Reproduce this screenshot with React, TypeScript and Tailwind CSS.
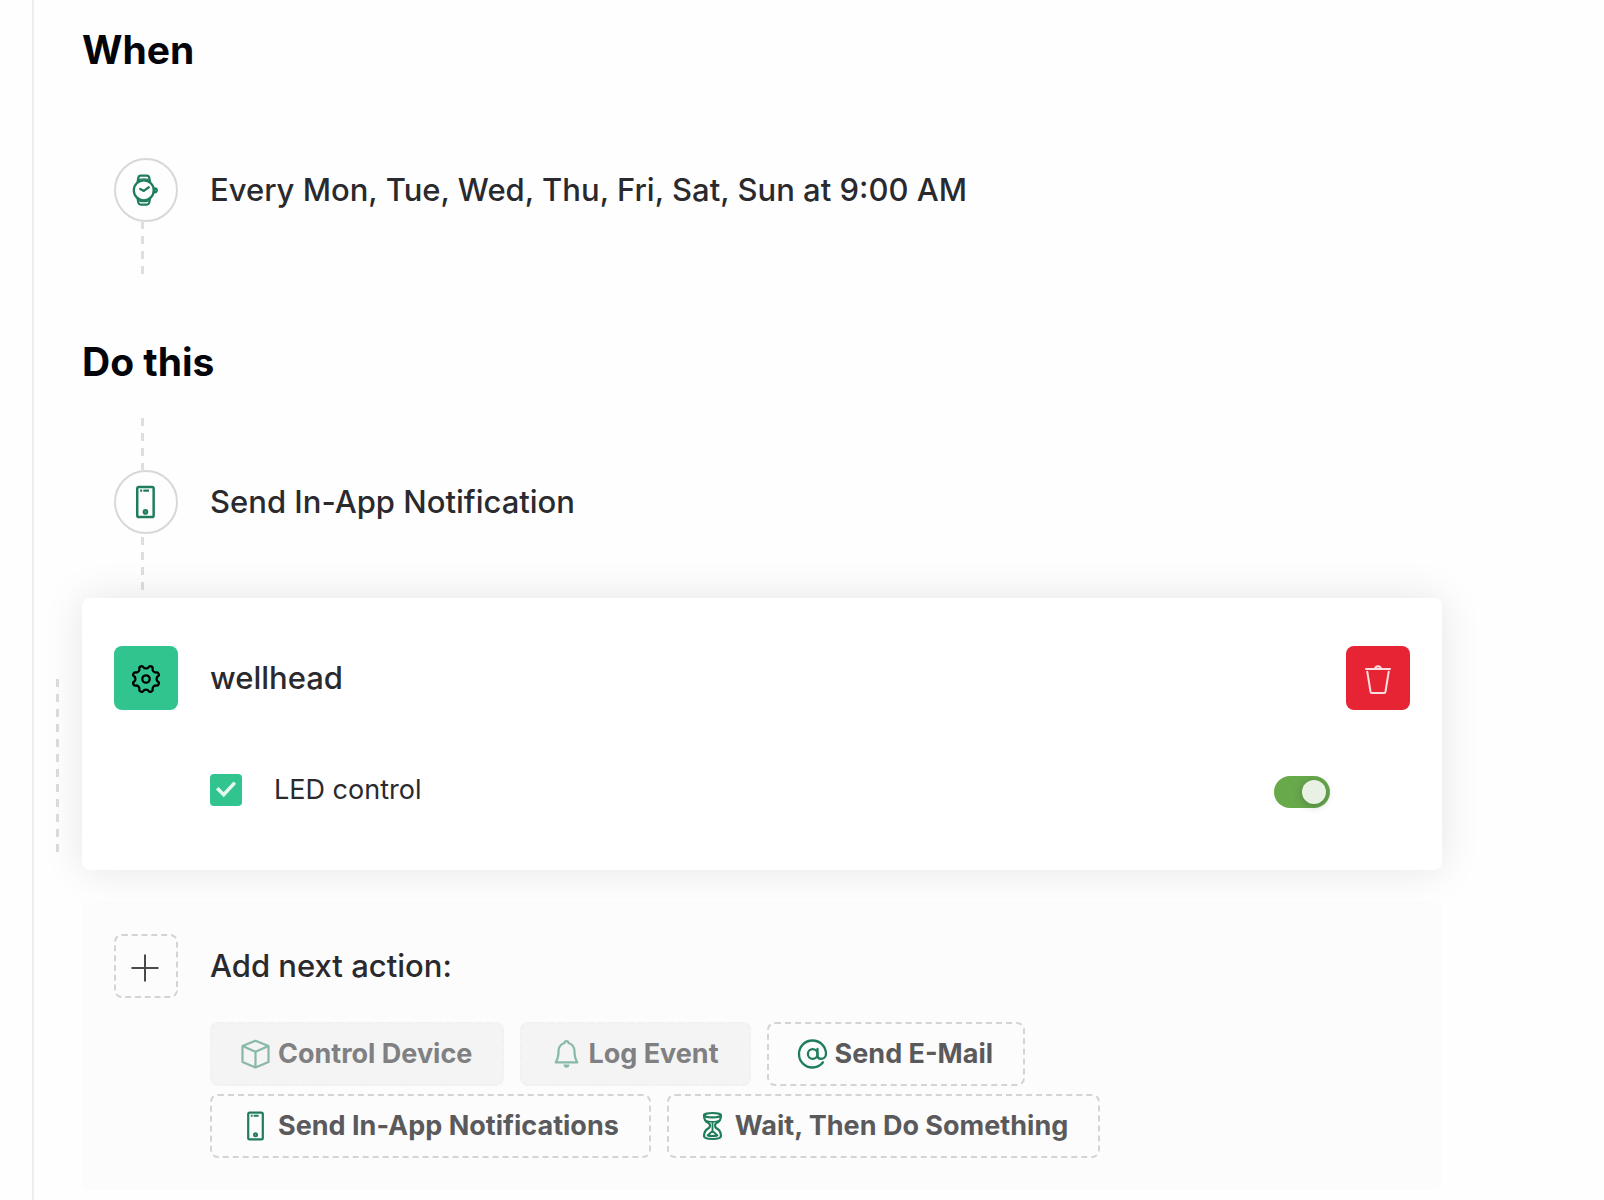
import type { ReactNode } from "react";

function WatchIcon() {
  return (
    <svg viewBox="0 0 28 34" className="h-[34px] w-7" fill="none" stroke="#1f7d5b" strokeWidth="2.300" strokeLinecap="round" strokeLinejoin="round" aria-hidden="true">
      <circle cx="11.800" cy="17.300" r="10" />
      <path d="M5.600 9 6.500 4.200Q7 2.600 8.700 2.600h6.200q1.700 0 2.200 1.600l.9 4.800" />
      <path d="M7.500 6.400q4.300-1 8.600 0M7.500 28.200q4.300 1 8.600 0" strokeWidth="1.300" />
      <path d="M5.600 25.600 6.500 30q.5 1.600 2.200 1.600h6.200q1.700 0 2.200-1.600l.9-4.400" />
      <path d="M8.200 16 11.800 17.900 16.800 14.300" />
      <path d="M22 15.300 24 15.600q1.600 1.700 0 3.400L22 19.300z" />
    </svg>
  );
}

function PhoneIcon({ className }: { className: string }) {
  return (
    <svg viewBox="0 0 32 32" className={className} fill="none" stroke="#1f7d5b" strokeWidth="2.200" strokeLinejoin="round" aria-hidden="true">
      <rect x="8.200" y="2.600" width="14.600" height="26.800" rx="1.400" />
      <path d="M10.800 5.800h1.800M13.600 5.800h5" strokeWidth="2" />
      <circle cx="15.500" cy="24.800" r="2.500" fill="#1f7d5b" stroke="none" />
      <circle cx="15.500" cy="24.800" r="0.600" fill="#8fc0ad" stroke="none" />
    </svg>
  );
}

function GearIcon() {
  return (
    <svg viewBox="0 -1 32 32" className="size-8" fill="none" stroke="#000" strokeWidth="2.300" strokeLinejoin="round" aria-hidden="true">
      <circle cx="16" cy="16" r="3.700" />
      <path d="M16 5.400Q18 5.400 18.600 4.200 19.600 2.600 21 3.300 23 4 22.600 5.600 22.200 7 23.500 8.500 25 9.800 26.400 9.400 28 9 28.700 11 29.400 12.400 27.800 13.400 26.600 14 26.600 16 26.600 18 27.800 18.600 29.400 19.600 28.700 21 28 23 26.400 22.600 25 22.200 23.500 23.500 22.200 25 22.600 26.400 23 28 21 28.700 19.600 29.400 18.600 27.800 18 26.600 16 26.600 14 26.600 13.400 27.800 12.400 29.400 11 28.700 9 28 9.400 26.400 9.800 25 8.500 23.500 7 22.200 5.600 22.600 4 23 3.300 21 2.600 19.600 4.200 18.600 5.400 18 5.400 16 5.400 14 4.200 13.400 2.600 12.400 3.300 11 4 9 5.600 9.400 7 9.800 8.500 8.500 9.800 7 9.400 5.600 9 4 11 3.300 12.400 2.600 13.400 4.200 14 5.400 16 5.400Z" />
    </svg>
  );
}

function TrashIcon() {
  return (
    <svg viewBox="0 0 32 32" className="size-8" fill="none" stroke="#fbdfe2" strokeWidth="2" strokeLinecap="round" strokeLinejoin="round" aria-hidden="true">
      <path d="M4 7h24" />
      <path d="M13 6.500q.7-2.300 3-2.300t3 2.300" />
      <path d="M5.300 9.800 8.600 30q.2 1 1.200 1h12.400q1 0 1.200-1l3.300-20.200" />
    </svg>
  );
}

function CubeIcon() {
  return (
    <svg viewBox="0 0 32 32" className="size-8" fill="none" stroke="#1f7d5b" strokeWidth="2.200" strokeLinejoin="round" aria-hidden="true">
      <path d="M15.500 2.800 28.500 8v16L15.500 29.500 2.500 24V8z" />
      <path d="M2.500 8l13 5.700L28.500 8M15.500 13.700v15.800" />
    </svg>
  );
}

function BellIcon() {
  return (
    <svg viewBox="0 0 32 32" className="size-8" fill="none" stroke="#1f7d5b" strokeWidth="2.200" strokeLinejoin="round" aria-hidden="true">
      <path d="M15 3.700q1.500-1.200 3 0l.6 1.300c3.600 1.200 5.900 4.300 5.900 8.300 0 5 .8 8 2.800 11H5.700C7.700 21.300 8.500 18.300 8.500 13.300c0-4 2.300-7.100 5.900-8.300z" />
      <path d="M13.500 26.500h6q-.4 3.200-3 3.200t-3-3.200z" fill="#1f7d5b" stroke="none" />
    </svg>
  );
}

function AtIcon() {
  return (
    <svg viewBox="0 0 32 32" className="size-8" fill="none" stroke="#1f7d5b" strokeWidth="2.300" strokeLinecap="round" aria-hidden="true">
      <circle cx="15.700" cy="16" r="4.800" />
      <path d="M20.500 11v6.500c0 2.200 1.400 3.300 3.400 3.300 3 0 5.100-2 5.100-4.800C29 8.300 23 2.500 15.500 2.500S2 8.300 2 16s6 13.500 13.500 13.500c4.300 0 8-1.900 10.500-5.200" />
    </svg>
  );
}

function HourglassIcon() {
  return (
    <svg viewBox="0 0 32 32" className="size-8" fill="none" stroke="#1f7d5b" strokeWidth="2.200" strokeLinecap="round" strokeLinejoin="round" aria-hidden="true">
      <ellipse cx="15.500" cy="5.200" rx="8.500" ry="2.200" />
      <path d="M7 5.500c0 4.500 1.500 6.300 4.500 7.500q1.500.8 1.500 2.500t-1.500 2.800C8.500 20 7 22 7 26c0 2.300 3 3 8.500 3s8.500-.7 8.500-3c0-4-1.500-6-4.500-7.700Q18 17.200 18 15.500t1.500-2.500c3-1.200 4.500-3 4.500-7.500" />
      <path d="M10 11q5.500 1.800 11 0M15.500 13.500v7M10.500 25.500l5-4.500 5 4.500q-5 1-10 0z" strokeWidth="1.800" />
    </svg>
  );
}

function StepCircle({ children }: { children: ReactNode }) {
  return (
    <div className="flex size-16 shrink-0 items-center justify-center rounded-full border-2 border-[#d8d8d8]">{children}</div>
  );
}

function Chip({ icon, label, disabled }: { icon: ReactNode; label: string; disabled?: boolean }) {
  return (
    <button
      type="button"
      disabled={disabled}
      className="flex h-16 items-center gap-1.5 rounded-lg border-2 border-dashed border-[#d4d4d4] pr-[30px] pl-7 text-[27px] leading-9 font-bold whitespace-nowrap text-[#5a5a5d] disabled:border-[#f1f1f1] disabled:bg-[#f4f4f4] disabled:text-[#808083] disabled:[&>svg]:opacity-50"
    >
      {icon}
      {label}
    </button>
  );
}

export default function App() {
  return (
    <div className="min-h-screen overflow-hidden bg-[#fefefe] pl-8 font-[Inter,'Liberation_Sans',sans-serif] text-[#2a2a2e]">
      <main className="min-h-screen border-l-2 border-[#eeeeee] pr-12 pb-2.5 pl-12">
        <div className="max-w-[1360px]">
          <section className="pt-[26px] pb-[38px]">
            <h2 className="text-[39px] leading-[48px] font-bold text-[#04040b]">When</h2>
            <div className="mt-[84px] flex items-center gap-8 pl-8">
              <StepCircle>
                <WatchIcon />
              </StepCircle>
              <p className="text-[31px] leading-10 font-medium">Every Mon, Tue, Wed, Thu, Fri, Sat, Sun at 9:00 AM</p>
            </div>
            <div className="ml-[59px] h-[52px] w-[3px] bg-[repeating-linear-gradient(to_top,#dedede_0_8px,transparent_8px_15px)]" />
          </section>

          <section className="pt-[26px]">
            <h2 className="text-[39px] leading-[48px] font-bold text-[#04040b]">Do this</h2>
            <div className="mt-8 ml-[59px] h-[52px] w-[3px] bg-[repeating-linear-gradient(to_bottom,#dedede_0_8px,transparent_8px_15px)]" />
            <div className="flex items-center gap-8 pl-8">
              <StepCircle>
                <PhoneIcon className="size-9" />
              </StepCircle>
              <p className="text-[31px] leading-10 font-medium">Send In-App Notification</p>
            </div>
            <div className="mb-2 ml-[59px] h-14 w-[3px] bg-[repeating-linear-gradient(to_top,#dedede_0_8px,transparent_8px_15px)]" />

            <div className="relative rounded-lg bg-white px-8 pt-12 pb-16 shadow-[0_0_40px_rgba(0,0,0,0.1)]">
              <div className="absolute top-[81px] -left-[26px] h-[173px] w-[3px] bg-[repeating-linear-gradient(to_bottom,#dadada_0_8px,transparent_8px_15px)]" />
              <div className="flex items-center gap-8">
                <div className="flex size-16 items-center justify-center rounded-lg bg-[#31c48f]">
                  <GearIcon />
                </div>
                <h3 className="flex-1 text-[31px] leading-10 font-medium">wellhead</h3>
                <button type="button" aria-label="Delete action" className="flex size-16 items-center justify-center rounded-lg bg-[#e72434]">
                  <TrashIcon />
                </button>
              </div>
              <div className="mt-16 flex items-center justify-between pr-20 pl-24">
                <label className="flex items-center gap-8 text-[27px] leading-8">
                  <span className="grid size-8 *:[grid-area:1/1]">
                    <input type="checkbox" defaultChecked className="size-8 appearance-none rounded bg-[#31c48f]" />
                    <svg viewBox="0 0 32 32" className="pointer-events-none size-8" fill="none" stroke="#e4f7ef" strokeWidth="3.600" aria-hidden="true">
                      <path d="M7.200 14.200 13.700 20.700 24.800 8.600" />
                    </svg>
                  </span>
                  LED control
                </label>
                <input
                  type="checkbox"
                  role="switch"
                  defaultChecked
                  aria-label="LED control state"
                  className="mt-0.5 -mb-0.5 flex h-8 w-14 appearance-none items-center rounded-full bg-[#68a94c] p-1 before:size-6 before:rounded-full before:bg-[#e8f1e4] before:shadow-[0_2px_8px_rgba(0,0,0,0.25)] checked:justify-end"
                />
              </div>
            </div>

            <div className="mt-8 rounded-lg bg-[#fcfcfc] p-8">
              <div className="flex items-center gap-8">
                <button type="button" aria-label="Add action" className="flex size-16 items-center justify-center rounded-lg border-2 border-dashed border-[#d4d4d4]">
                  <svg viewBox="0 0 32 32" className="size-8" fill="none" stroke="#4a4a4d" strokeWidth="2" aria-hidden="true">
                    <path d="M15 4.500v27M1.500 18h27" />
                  </svg>
                </button>
                <h3 className="text-[31px] leading-10 font-medium">Add next action:</h3>
              </div>
              <div className="mt-6 ml-24 flex flex-wrap gap-x-4 gap-y-2">
                <Chip icon={<CubeIcon />} label="Control Device" disabled />
                <Chip icon={<BellIcon />} label="Log Event" disabled />
                <Chip icon={<AtIcon />} label="Send E-Mail" />
                <Chip icon={<PhoneIcon className="size-8" />} label="Send In-App Notifications" />
                <Chip icon={<HourglassIcon />} label="Wait, Then Do Something" />
              </div>
            </div>
          </section>
        </div>
      </main>
    </div>
  );
}
